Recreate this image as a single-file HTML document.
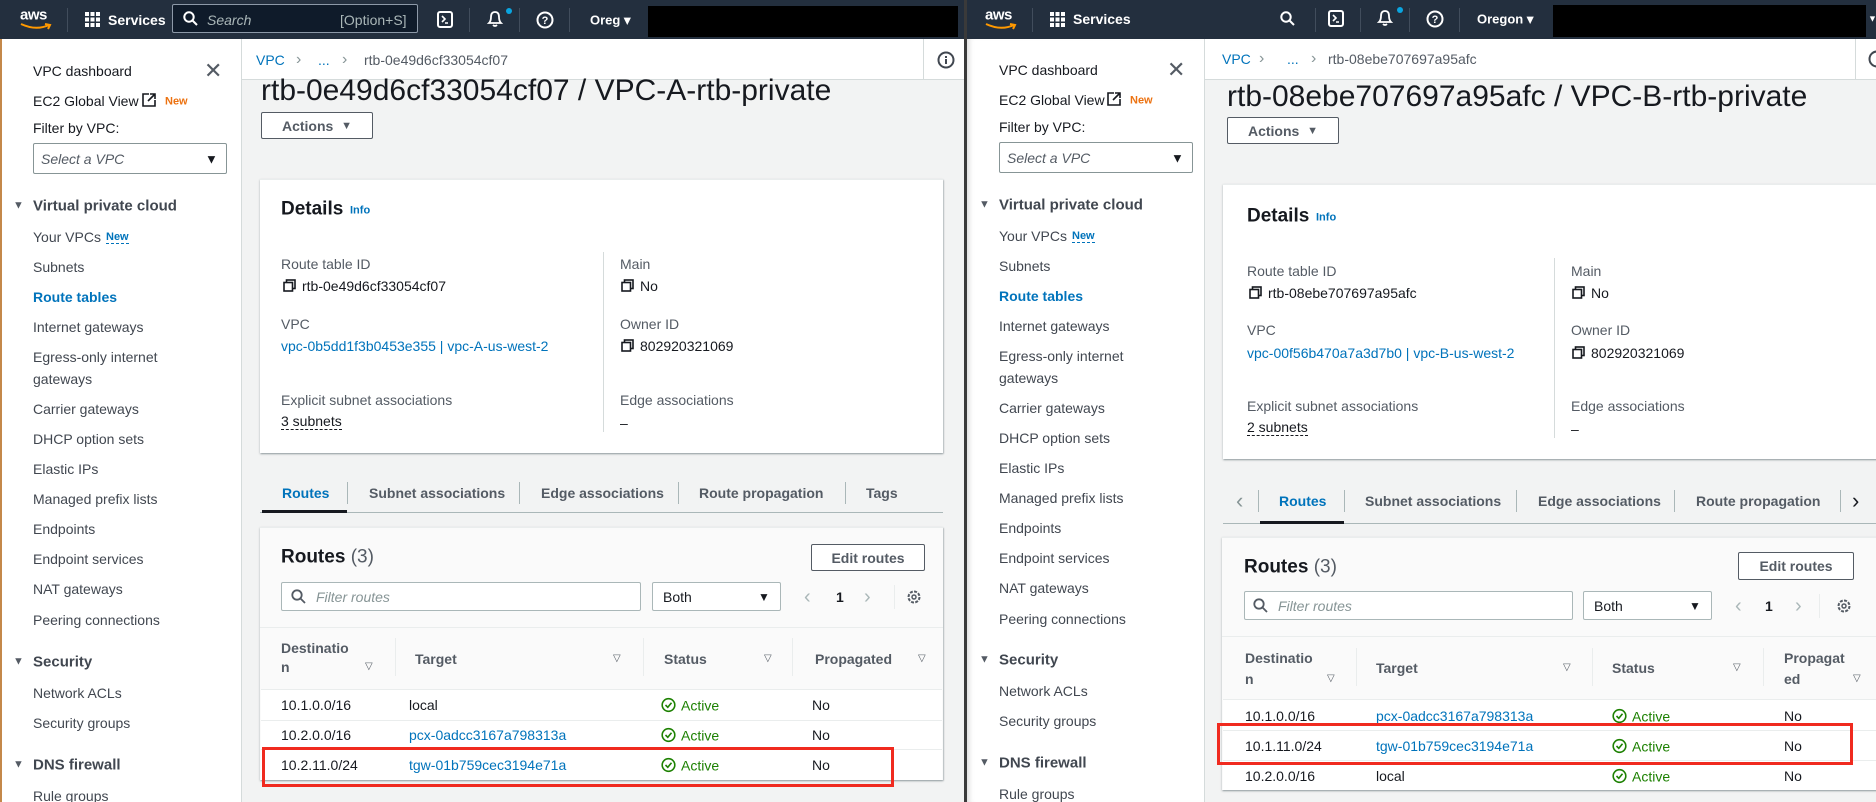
<!DOCTYPE html>
<html><head><meta charset="utf-8">
<style>
*{box-sizing:border-box;margin:0;padding:0}
body{width:1876px;height:802px;overflow:hidden;background:#3a3a3a;font-family:"Liberation Sans",sans-serif;color:#16191f;position:relative}
.win{position:absolute;top:0;height:802px;overflow:hidden;background:#f2f3f3}
.a{position:absolute}
.t{position:absolute;white-space:nowrap;transform:translateY(-50%);font-size:14px;line-height:1}
.top{position:absolute;left:0;top:0;right:0;height:39px;background:#232f3e}
.top .t{color:#fff}
.sb{position:absolute;left:0;top:39px;bottom:0;background:#fff;border-right:1px solid #d5dbdb}
.h{font-weight:bold}
.blue{color:#0073bb!important}
.grey{color:#545b64}
.card{position:absolute;background:#fff;box-shadow:0 1px 2px rgba(0,28,36,.3),1px 1px 1px rgba(0,28,36,.15);border-top:1px solid #eaeded}
.rc{background:#fafafa}
.vl{position:absolute;width:1px;background:#d5dbdb}
.hl{position:absolute;height:1px;background:#eaeded}
.btn{position:absolute;border:1px solid #545b64;background:#fff;border-radius:2px;font-weight:bold;color:#545b64;font-size:14px;display:flex;align-items:center;justify-content:center}
.inp{position:absolute;border:1px solid #aab7b8;background:#fff;border-radius:2px}
.red{position:absolute;border:3px solid #f02a1f}
.act{color:#1d8102;display:flex;align-items:center;gap:5px}
.act svg{flex:none}
</style></head><body>

<!-- LEFT WINDOW -->
<div class="win" style="left:0;width:964px">
  <div class="top">
    <div class="t" style="left:20px;top:15px;font-size:15px;font-weight:bold;letter-spacing:-.5px">aws</div>
    <svg class="a" style="left:20px;top:23px" width="32" height="7"><path d="M1 1 Q16 8 29 2 M25 1 L30 2 L28 6" stroke="#ff9900" stroke-width="2" fill="none"/></svg>
    <div class="a" style="left:67px;top:8px;width:1px;height:24px;background:#414d5c"></div>
    <svg class="a" style="left:85px;top:12px" width="15" height="15"><g fill="#fff"><rect x="0" y="0" width="4" height="4"/><rect x="5.5" y="0" width="4" height="4"/><rect x="11" y="0" width="4" height="4"/><rect x="0" y="5.5" width="4" height="4"/><rect x="5.5" y="5.5" width="4" height="4"/><rect x="11" y="5.5" width="4" height="4"/><rect x="0" y="11" width="4" height="4"/><rect x="5.5" y="11" width="4" height="4"/><rect x="11" y="11" width="4" height="4"/></g></svg>
    <div class="t" style="left:108px;top:20px;font-size:14px;font-weight:bold">Services</div>
    <div class="a" style="left:172px;top:4px;width:246px;height:29px;border:1px solid #8d99a8;border-radius:2px;background:#0f1b2a"></div>
    <svg class="a" style="left:183px;top:11px" width="15" height="15"><circle cx="6" cy="6" r="4.7" stroke="#fff" stroke-width="2" fill="none"/><path d="M9.5 9.5 L14 14" stroke="#fff" stroke-width="2"/></svg>
    <div class="t" style="left:207px;top:20px;font-size:14px;font-style:italic;color:#aab7b8">Search</div>
    <div class="t" style="left:340px;top:20px;font-size:14px;color:#aab7b8">[Option+S]</div>
    <svg class="a" style="left:437px;top:11px" width="16" height="17"><rect x="1" y="1" width="14" height="15" rx="2" stroke="#fff" stroke-width="2" fill="none"/><path d="M5 5 L8 8 L5 11 M8 12 H11" stroke="#fff" stroke-width="1.6" fill="none"/></svg>
    <div class="a" style="left:469px;top:8px;width:1px;height:24px;background:#414d5c"></div>
    <svg class="a" style="left:486px;top:9px" width="18" height="19"><path d="M3 14 Q5 12 5 8 Q5 3 9 3 Q13 3 13 8 Q13 12 15 14 Z M7 16 Q9 18 11 16" stroke="#fff" stroke-width="1.8" fill="none"/></svg>
    <div class="a" style="left:506px;top:8px;width:6px;height:6px;border-radius:50%;background:#0aa5e0"></div>
    <div class="a" style="left:519px;top:8px;width:1px;height:24px;background:#414d5c"></div>
    <svg class="a" style="left:536px;top:11px" width="18" height="18"><circle cx="9" cy="9" r="7.5" stroke="#fff" stroke-width="2" fill="none"/><text x="9" y="13" font-size="11" font-weight="bold" fill="#fff" text-anchor="middle" font-family="Liberation Sans">?</text></svg>
    <div class="a" style="left:569px;top:8px;width:1px;height:24px;background:#414d5c"></div>
    <div class="t" style="left:590px;top:20px;font-size:13px;font-weight:bold">Oreg ▾</div>
    <div class="a" style="left:648px;top:6px;width:310px;height:31px;background:#000"></div>
  </div>
  <div class="sb" style="width:242px">
    <div class="a" style="left:0;top:0;width:2px;bottom:0;background:#c4884a"></div>
  </div>
  <div class="t" style="left:33px;top:71px">VPC dashboard</div>
  <div class="t" style="left:204px;top:71px;font-size:22px;color:#545b64">✕</div>
  <div class="t" style="left:33px;top:101px">EC2 Global View</div>
  <svg class="a" style="left:142px;top:93px" width="14" height="14"><path d="M7 1 H1 V13 H13 V7 M8 1 H13 V6 M13 1 L6 8" stroke="#16191f" stroke-width="1.6" fill="none"/></svg>
  <div class="t" style="left:165px;top:102px;font-size:11px;color:#ec7211;font-weight:bold">New</div>
  <div class="t" style="left:33px;top:128px">Filter by VPC:</div>
  <div class="inp" style="left:33px;top:143px;width:194px;height:31px;border-color:#879596"></div>
  <div class="t" style="left:41px;top:159px;font-style:italic;color:#545b64">Select a VPC</div>
  <div class="t" style="left:205px;top:159px;font-size:13px;color:#16191f">▼</div>
  <div class="t" style="left:13px;top:206px;font-size:11px;color:#545b64">▼</div>
  <div class="t h" style="left:33px;top:206px;font-size:15px;color:#414750">Virtual private cloud</div>
  <div class="t" style="left:33px;top:237px;color:#414750">Your VPCs</div>
  <div class="t h blue" style="left:106px;top:238px;font-size:11px;border-bottom:1px dashed #0073bb">New</div>
  <div class="t" style="left:33px;top:267px;color:#414750">Subnets</div>
  <div class="t h blue" style="left:33px;top:297px">Route tables</div>
  <div class="t" style="left:33px;top:327px;color:#414750">Internet gateways</div>
  <div class="t" style="left:33px;top:357px;color:#414750">Egress-only internet</div>
  <div class="t" style="left:33px;top:379px;color:#414750">gateways</div>
  <div class="t" style="left:33px;top:409px;color:#414750">Carrier gateways</div>
  <div class="t" style="left:33px;top:439px;color:#414750">DHCP option sets</div>
  <div class="t" style="left:33px;top:469px;color:#414750">Elastic IPs</div>
  <div class="t" style="left:33px;top:499px;color:#414750">Managed prefix lists</div>
  <div class="t" style="left:33px;top:529px;color:#414750">Endpoints</div>
  <div class="t" style="left:33px;top:559px;color:#414750">Endpoint services</div>
  <div class="t" style="left:33px;top:589px;color:#414750">NAT gateways</div>
  <div class="t" style="left:33px;top:620px;color:#414750">Peering connections</div>
  <div class="t" style="left:13px;top:662px;font-size:11px;color:#545b64">▼</div>
  <div class="t h" style="left:33px;top:662px;font-size:15px;color:#414750">Security</div>
  <div class="t" style="left:33px;top:693px;color:#414750">Network ACLs</div>
  <div class="t" style="left:33px;top:723px;color:#414750">Security groups</div>
  <div class="t" style="left:13px;top:765px;font-size:11px;color:#545b64">▼</div>
  <div class="t h" style="left:33px;top:765px;font-size:15px;color:#414750">DNS firewall</div>
  <div class="t" style="left:33px;top:796px;color:#414750">Rule groups</div>

  <div class="a" style="left:242px;top:39px;right:0;height:41px;background:#fff;border-bottom:1px solid #d5dbdb"></div>
  <div class="t blue" style="left:256px;top:60px">VPC</div>
  <div class="t" style="left:296px;top:60px;color:#879596;font-size:16px">›</div>
  <div class="t blue" style="left:318px;top:60px">...</div>
  <div class="t" style="left:342px;top:60px;color:#879596;font-size:16px">›</div>
  <div class="t" style="left:364px;top:60px;color:#545b64">rtb-0e49d6cf33054cf07</div>
  <div class="a" style="left:923px;top:39px;width:1px;height:41px;background:#d5dbdb"></div>
  <svg class="a" style="left:937px;top:51px" width="18" height="18"><circle cx="9" cy="9" r="7.5" stroke="#414750" stroke-width="2" fill="none"/><rect x="8" y="8" width="2" height="5" fill="#414750"/><rect x="8" y="5" width="2" height="2" fill="#414750"/></svg>

  <div class="t" style="left:261px;top:91px;font-size:30px;color:#16191f">rtb-0e49d6cf33054cf07 / VPC-A-rtb-private</div>
  <div class="btn" style="left:261px;top:112px;width:112px;height:27px">Actions&nbsp;&nbsp;<span style="font-size:11px">▼</span></div>

  <div class="card" style="left:260px;top:179px;width:683px;height:274px"></div>
  <div class="t h" style="left:281px;top:209px;font-size:19px">Details</div>
  <div class="t h blue" style="left:350px;top:211px;font-size:11px">Info</div>
  <div class="vl" style="left:603px;top:252px;height:180px"></div>
  <div class="t grey" style="left:281px;top:264px">Route table ID</div>
  <svg class="a" style="left:283px;top:279px" width="13" height="13"><rect x="3.5" y="1" width="8.5" height="8.5" stroke="#16191f" stroke-width="1.6" fill="none"/><rect x="1" y="3.5" width="8.5" height="8.5" stroke="#16191f" stroke-width="1.6" fill="#fff"/></svg>
  <div class="t" style="left:302px;top:286px">rtb-0e49d6cf33054cf07</div>
  <div class="t grey" style="left:281px;top:324px">VPC</div>
  <div class="t blue" style="left:281px;top:346px">vpc-0b5dd1f3b0453e355 | vpc-A-us-west-2</div>
  <div class="t grey" style="left:281px;top:400px">Explicit subnet associations</div>
  <div class="t" style="left:281px;top:422px;border-bottom:1px dashed #16191f;padding-bottom:1px">3 subnets</div>
  <div class="t grey" style="left:620px;top:264px">Main</div>
  <svg class="a" style="left:621px;top:279px" width="13" height="13"><rect x="3.5" y="1" width="8.5" height="8.5" stroke="#16191f" stroke-width="1.6" fill="none"/><rect x="1" y="3.5" width="8.5" height="8.5" stroke="#16191f" stroke-width="1.6" fill="#fff"/></svg>
  <div class="t" style="left:640px;top:286px">No</div>
  <div class="t grey" style="left:620px;top:324px">Owner ID</div>
  <svg class="a" style="left:621px;top:339px" width="13" height="13"><rect x="3.5" y="1" width="8.5" height="8.5" stroke="#16191f" stroke-width="1.6" fill="none"/><rect x="1" y="3.5" width="8.5" height="8.5" stroke="#16191f" stroke-width="1.6" fill="#fff"/></svg>
  <div class="t" style="left:640px;top:346px">802920321069</div>
  <div class="t grey" style="left:620px;top:400px">Edge associations</div>
  <div class="t" style="left:620px;top:423px">–</div>

  <div class="a" style="left:260px;top:512px;width:683px;height:1px;background:#aab7b8"></div>
  <div class="a" style="left:262px;top:510px;width:85px;height:3px;background:#16191f"></div>
  <div class="t h blue" style="left:282px;top:493px">Routes</div>
  <div class="vl" style="left:347px;top:482px;height:22px;background:#aab7b8"></div>
  <div class="t h grey" style="left:369px;top:493px">Subnet associations</div>
  <div class="vl" style="left:519px;top:482px;height:22px;background:#aab7b8"></div>
  <div class="t h grey" style="left:541px;top:493px">Edge associations</div>
  <div class="vl" style="left:678px;top:482px;height:22px;background:#aab7b8"></div>
  <div class="t h grey" style="left:699px;top:493px">Route propagation</div>
  <div class="vl" style="left:845px;top:482px;height:22px;background:#aab7b8"></div>
  <div class="t h grey" style="left:866px;top:493px">Tags</div>

  <div class="card rc" style="left:260px;top:527px;width:683px;height:253px"></div>
  <div class="t h" style="left:281px;top:557px;font-size:19px">Routes <span style="font-weight:normal;color:#545b64">(3)</span></div>
  <div class="btn" style="left:811px;top:544px;width:114px;height:27px">Edit routes</div>
  <div class="inp" style="left:281px;top:582px;width:360px;height:29px"></div>
  <svg class="a" style="left:291px;top:589px" width="15" height="15"><circle cx="6" cy="6" r="4.7" stroke="#545b64" stroke-width="1.8" fill="none"/><path d="M9.5 9.5 L14 14" stroke="#545b64" stroke-width="1.8"/></svg>
  <div class="t" style="left:316px;top:597px;font-style:italic;color:#879596">Filter routes</div>
  <div class="inp" style="left:652px;top:582px;width:129px;height:29px"></div>
  <div class="t" style="left:663px;top:597px">Both</div>
  <div class="t" style="left:758px;top:597px;font-size:12px">▼</div>
  <div class="t" style="left:804px;top:597px;font-size:20px;color:#aab7b8">‹</div>
  <div class="t h" style="left:836px;top:597px">1</div>
  <div class="t" style="left:864px;top:597px;font-size:20px;color:#aab7b8">›</div>
  <div class="vl" style="left:894px;top:585px;height:24px;background:#eaeded"></div>
  <svg class="a" style="left:906px;top:589px" width="16" height="16"><circle cx="8" cy="8" r="5.5" stroke="#545b64" stroke-width="2" fill="none" stroke-dasharray="3 1.3"/><circle cx="8" cy="8" r="2" stroke="#545b64" stroke-width="1.5" fill="none"/></svg>
  <div class="hl" style="left:260px;top:627px;width:683px"></div>
  <div class="t h grey" style="left:281px;top:648px">Destinatio</div>
  <div class="t h grey" style="left:281px;top:667px">n</div>
  <div class="t grey" style="left:365px;top:667px;font-size:10px">▽</div>
  <div class="vl" style="left:395px;top:638px;height:38px;background:#eaeded"></div>
  <div class="t h grey" style="left:415px;top:659px">Target</div>
  <div class="t grey" style="left:613px;top:659px;font-size:10px">▽</div>
  <div class="vl" style="left:643px;top:638px;height:38px;background:#eaeded"></div>
  <div class="t h grey" style="left:664px;top:659px">Status</div>
  <div class="t grey" style="left:764px;top:659px;font-size:10px">▽</div>
  <div class="vl" style="left:792px;top:638px;height:38px;background:#eaeded"></div>
  <div class="t h grey" style="left:815px;top:659px">Propagated</div>
  <div class="t grey" style="left:918px;top:659px;font-size:10px">▽</div>
  <div class="a" style="left:261px;top:689px;width:681px;height:91px;background:#fff"></div>
  <div class="hl" style="left:261px;top:689px;width:681px"></div>
  <div class="hl" style="left:261px;top:720px;width:681px"></div>
  <div class="hl" style="left:261px;top:749px;width:681px"></div>
  <div class="t" style="left:281px;top:705px">10.1.0.0/16</div>
  <div class="t" style="left:409px;top:705px">local</div>
  <div class="t act" style="left:661px;top:705px"><svg width="15" height="15"><circle cx="7.5" cy="7.5" r="6.3" stroke="#1d8102" stroke-width="1.6" fill="none"/><path d="M4.5 7.5 L6.8 9.8 L10.5 5.3" stroke="#1d8102" stroke-width="1.6" fill="none"/></svg>Active</div>
  <div class="t" style="left:812px;top:705px">No</div>
  <div class="t" style="left:281px;top:735px">10.2.0.0/16</div>
  <div class="t blue" style="left:409px;top:735px">pcx-0adcc3167a798313a</div>
  <div class="t act" style="left:661px;top:735px"><svg width="15" height="15"><circle cx="7.5" cy="7.5" r="6.3" stroke="#1d8102" stroke-width="1.6" fill="none"/><path d="M4.5 7.5 L6.8 9.8 L10.5 5.3" stroke="#1d8102" stroke-width="1.6" fill="none"/></svg>Active</div>
  <div class="t" style="left:812px;top:735px">No</div>
  <div class="t" style="left:281px;top:765px">10.2.11.0/24</div>
  <div class="t blue" style="left:409px;top:765px">tgw-01b759cec3194e71a</div>
  <div class="t act" style="left:661px;top:765px"><svg width="15" height="15"><circle cx="7.5" cy="7.5" r="6.3" stroke="#1d8102" stroke-width="1.6" fill="none"/><path d="M4.5 7.5 L6.8 9.8 L10.5 5.3" stroke="#1d8102" stroke-width="1.6" fill="none"/></svg>Active</div>
  <div class="t" style="left:812px;top:765px">No</div>
  <div class="red" style="left:262px;top:747px;width:632px;height:40px"></div>
</div>

<!-- RIGHT WINDOW -->
<div class="win" style="left:967px;width:909px">
  <div class="top">
    <div class="t" style="left:18px;top:15px;font-size:15px;font-weight:bold;letter-spacing:-.5px">aws</div>
    <svg class="a" style="left:18px;top:23px" width="32" height="7"><path d="M1 1 Q16 8 29 2 M25 1 L30 2 L28 6" stroke="#ff9900" stroke-width="2" fill="none"/></svg>
    <div class="a" style="left:65px;top:8px;width:1px;height:24px;background:#414d5c"></div>
    <svg class="a" style="left:83px;top:12px" width="15" height="15"><g fill="#fff"><rect x="0" y="0" width="4" height="4"/><rect x="5.5" y="0" width="4" height="4"/><rect x="11" y="0" width="4" height="4"/><rect x="0" y="5.5" width="4" height="4"/><rect x="5.5" y="5.5" width="4" height="4"/><rect x="11" y="5.5" width="4" height="4"/><rect x="0" y="11" width="4" height="4"/><rect x="5.5" y="11" width="4" height="4"/><rect x="11" y="11" width="4" height="4"/></g></svg>
    <div class="t" style="left:106px;top:19px;font-size:14px;font-weight:bold">Services</div>
    <svg class="a" style="left:313px;top:11px" width="15" height="15"><circle cx="6" cy="6" r="4.7" stroke="#fff" stroke-width="2" fill="none"/><path d="M9.5 9.5 L14 14" stroke="#fff" stroke-width="2"/></svg>
    <div class="a" style="left:348px;top:8px;width:1px;height:24px;background:#414d5c"></div>
    <svg class="a" style="left:361px;top:10px" width="16" height="17"><rect x="1" y="1" width="14" height="15" rx="2" stroke="#fff" stroke-width="2" fill="none"/><path d="M5 5 L8 8 L5 11 M8 12 H11" stroke="#fff" stroke-width="1.6" fill="none"/></svg>
    <div class="a" style="left:393px;top:8px;width:1px;height:24px;background:#414d5c"></div>
    <svg class="a" style="left:409px;top:8px" width="18" height="19"><path d="M3 14 Q5 12 5 8 Q5 3 9 3 Q13 3 13 8 Q13 12 15 14 Z M7 16 Q9 18 11 16" stroke="#fff" stroke-width="1.8" fill="none"/></svg>
    <div class="a" style="left:430px;top:7px;width:6px;height:6px;border-radius:50%;background:#0aa5e0"></div>
    <div class="a" style="left:442px;top:8px;width:1px;height:24px;background:#414d5c"></div>
    <svg class="a" style="left:459px;top:10px" width="18" height="18"><circle cx="9" cy="9" r="7.5" stroke="#fff" stroke-width="2" fill="none"/><text x="9" y="13" font-size="11" font-weight="bold" fill="#fff" text-anchor="middle" font-family="Liberation Sans">?</text></svg>
    <div class="a" style="left:492px;top:8px;width:1px;height:24px;background:#414d5c"></div>
    <div class="t" style="left:510px;top:19px;font-size:13px;font-weight:bold">Oregon ▾</div>
    <div class="a" style="left:586px;top:5px;width:313px;height:32px;background:#000"></div>
    <div class="t" style="left:901px;top:19px;font-size:9px">▼</div>
  </div>
  <div class="sb" style="width:238px;box-shadow:inset 6px 0 6px -4px rgba(0,0,0,.15)"></div>
  <div class="t" style="left:32px;top:70px">VPC dashboard</div>
  <div class="t" style="left:200px;top:70px;font-size:22px;color:#545b64">✕</div>
  <div class="t" style="left:32px;top:100px">EC2 Global View</div>
  <svg class="a" style="left:140px;top:92px" width="14" height="14"><path d="M7 1 H1 V13 H13 V7 M8 1 H13 V6 M13 1 L6 8" stroke="#16191f" stroke-width="1.6" fill="none"/></svg>
  <div class="t" style="left:163px;top:101px;font-size:11px;color:#ec7211;font-weight:bold">New</div>
  <div class="t" style="left:32px;top:127px">Filter by VPC:</div>
  <div class="inp" style="left:32px;top:142px;width:194px;height:31px;border-color:#879596"></div>
  <div class="t" style="left:40px;top:158px;font-style:italic;color:#545b64">Select a VPC</div>
  <div class="t" style="left:204px;top:158px;font-size:13px">▼</div>
  <div class="t" style="left:12px;top:205px;font-size:11px;color:#545b64">▼</div>
  <div class="t h" style="left:32px;top:205px;font-size:15px;color:#414750">Virtual private cloud</div>
  <div class="t" style="left:32px;top:236px;color:#414750">Your VPCs</div>
  <div class="t h blue" style="left:105px;top:237px;font-size:11px;border-bottom:1px dashed #0073bb">New</div>
  <div class="t" style="left:32px;top:266px;color:#414750">Subnets</div>
  <div class="t h blue" style="left:32px;top:296px">Route tables</div>
  <div class="t" style="left:32px;top:326px;color:#414750">Internet gateways</div>
  <div class="t" style="left:32px;top:356px;color:#414750">Egress-only internet</div>
  <div class="t" style="left:32px;top:378px;color:#414750">gateways</div>
  <div class="t" style="left:32px;top:408px;color:#414750">Carrier gateways</div>
  <div class="t" style="left:32px;top:438px;color:#414750">DHCP option sets</div>
  <div class="t" style="left:32px;top:468px;color:#414750">Elastic IPs</div>
  <div class="t" style="left:32px;top:498px;color:#414750">Managed prefix lists</div>
  <div class="t" style="left:32px;top:528px;color:#414750">Endpoints</div>
  <div class="t" style="left:32px;top:558px;color:#414750">Endpoint services</div>
  <div class="t" style="left:32px;top:588px;color:#414750">NAT gateways</div>
  <div class="t" style="left:32px;top:619px;color:#414750">Peering connections</div>
  <div class="t" style="left:12px;top:660px;font-size:11px;color:#545b64">▼</div>
  <div class="t h" style="left:32px;top:660px;font-size:15px;color:#414750">Security</div>
  <div class="t" style="left:32px;top:691px;color:#414750">Network ACLs</div>
  <div class="t" style="left:32px;top:721px;color:#414750">Security groups</div>
  <div class="t" style="left:12px;top:763px;font-size:11px;color:#545b64">▼</div>
  <div class="t h" style="left:32px;top:763px;font-size:15px;color:#414750">DNS firewall</div>
  <div class="t" style="left:32px;top:794px;color:#414750">Rule groups</div>

  <div class="a" style="left:238px;top:39px;right:0;height:41px;background:#fff;border-bottom:1px solid #d5dbdb"></div>
  <div class="t blue" style="left:255px;top:59px">VPC</div>
  <div class="t" style="left:292px;top:59px;color:#879596;font-size:16px">›</div>
  <div class="t blue" style="left:320px;top:59px">...</div>
  <div class="t" style="left:344px;top:59px;color:#879596;font-size:16px">›</div>
  <div class="t" style="left:361px;top:59px;color:#545b64">rtb-08ebe707697a95afc</div>
  <div class="a" style="left:888px;top:39px;width:1px;height:41px;background:#d5dbdb"></div>
  <svg class="a" style="left:901px;top:50px" width="18" height="18"><circle cx="9" cy="9" r="7.5" stroke="#414750" stroke-width="2" fill="none"/><rect x="8" y="8" width="2" height="5" fill="#414750"/><rect x="8" y="5" width="2" height="2" fill="#414750"/></svg>

  <div class="t" style="left:260px;top:97px;font-size:30px">rtb-08ebe707697a95afc / VPC-B-rtb-private</div>
  <div class="btn" style="left:260px;top:117px;width:112px;height:27px">Actions&nbsp;&nbsp;<span style="font-size:11px">▼</span></div>

  <div class="card" style="left:256px;top:184px;width:660px;height:275px"></div>
  <div class="t h" style="left:280px;top:216px;font-size:19px">Details</div>
  <div class="t h blue" style="left:349px;top:218px;font-size:11px">Info</div>
  <div class="vl" style="left:587px;top:258px;height:180px"></div>
  <div class="t grey" style="left:280px;top:271px">Route table ID</div>
  <svg class="a" style="left:282px;top:286px" width="13" height="13"><rect x="3.5" y="1" width="8.5" height="8.5" stroke="#16191f" stroke-width="1.6" fill="none"/><rect x="1" y="3.5" width="8.5" height="8.5" stroke="#16191f" stroke-width="1.6" fill="#fff"/></svg>
  <div class="t" style="left:301px;top:293px">rtb-08ebe707697a95afc</div>
  <div class="t grey" style="left:280px;top:330px">VPC</div>
  <div class="t blue" style="left:280px;top:353px">vpc-00f56b470a7a3d7b0 | vpc-B-us-west-2</div>
  <div class="t grey" style="left:280px;top:406px">Explicit subnet associations</div>
  <div class="t" style="left:280px;top:428px;border-bottom:1px dashed #16191f;padding-bottom:1px">2 subnets</div>
  <div class="t grey" style="left:604px;top:271px">Main</div>
  <svg class="a" style="left:605px;top:286px" width="13" height="13"><rect x="3.5" y="1" width="8.5" height="8.5" stroke="#16191f" stroke-width="1.6" fill="none"/><rect x="1" y="3.5" width="8.5" height="8.5" stroke="#16191f" stroke-width="1.6" fill="#fff"/></svg>
  <div class="t" style="left:624px;top:293px">No</div>
  <div class="t grey" style="left:604px;top:330px">Owner ID</div>
  <svg class="a" style="left:605px;top:346px" width="13" height="13"><rect x="3.5" y="1" width="8.5" height="8.5" stroke="#16191f" stroke-width="1.6" fill="none"/><rect x="1" y="3.5" width="8.5" height="8.5" stroke="#16191f" stroke-width="1.6" fill="#fff"/></svg>
  <div class="t" style="left:624px;top:353px">802920321069</div>
  <div class="t grey" style="left:604px;top:406px">Edge associations</div>
  <div class="t" style="left:604px;top:429px">–</div>

  <div class="a" style="left:256px;top:523px;width:660px;height:1px;background:#aab7b8"></div>
  <div class="a" style="left:293px;top:521px;width:84px;height:3px;background:#16191f"></div>
  <div class="t" style="left:269px;top:501px;font-size:22px;color:#879596">‹</div>
  <div class="vl" style="left:291px;top:490px;height:22px;background:#aab7b8"></div>
  <div class="t h blue" style="left:312px;top:501px">Routes</div>
  <div class="vl" style="left:377px;top:490px;height:22px;background:#aab7b8"></div>
  <div class="t h grey" style="left:398px;top:501px">Subnet associations</div>
  <div class="vl" style="left:549px;top:490px;height:22px;background:#aab7b8"></div>
  <div class="t h grey" style="left:571px;top:501px">Edge associations</div>
  <div class="vl" style="left:707px;top:490px;height:22px;background:#aab7b8"></div>
  <div class="t h grey" style="left:729px;top:501px">Route propagation</div>
  <div class="vl" style="left:873px;top:490px;height:22px;background:#aab7b8"></div>
  <div class="t" style="left:885px;top:501px;font-size:22px;color:#16191f">›</div>

  <div class="card rc" style="left:255px;top:537px;width:660px;height:253px"></div>
  <div class="t h" style="left:277px;top:567px;font-size:19px">Routes <span style="font-weight:normal;color:#545b64">(3)</span></div>
  <div class="btn" style="left:771px;top:552px;width:116px;height:28px">Edit routes</div>
  <div class="inp" style="left:277px;top:591px;width:329px;height:29px"></div>
  <svg class="a" style="left:286px;top:598px" width="15" height="15"><circle cx="6" cy="6" r="4.7" stroke="#545b64" stroke-width="1.8" fill="none"/><path d="M9.5 9.5 L14 14" stroke="#545b64" stroke-width="1.8"/></svg>
  <div class="t" style="left:311px;top:606px;font-style:italic;color:#879596">Filter routes</div>
  <div class="inp" style="left:616px;top:591px;width:129px;height:29px"></div>
  <div class="t" style="left:627px;top:606px">Both</div>
  <div class="t" style="left:722px;top:606px;font-size:12px">▼</div>
  <div class="t" style="left:768px;top:606px;font-size:20px;color:#aab7b8">‹</div>
  <div class="t h" style="left:798px;top:606px">1</div>
  <div class="t" style="left:828px;top:606px;font-size:20px;color:#aab7b8">›</div>
  <div class="vl" style="left:852px;top:594px;height:24px;background:#eaeded"></div>
  <svg class="a" style="left:869px;top:598px" width="16" height="16"><circle cx="8" cy="8" r="5.5" stroke="#545b64" stroke-width="2" fill="none" stroke-dasharray="3 1.3"/><circle cx="8" cy="8" r="2" stroke="#545b64" stroke-width="1.5" fill="none"/></svg>
  <div class="hl" style="left:255px;top:636px;width:660px"></div>
  <div class="t h grey" style="left:278px;top:658px">Destinatio</div>
  <div class="t h grey" style="left:278px;top:679px">n</div>
  <div class="t grey" style="left:360px;top:679px;font-size:10px">▽</div>
  <div class="vl" style="left:389px;top:648px;height:38px;background:#eaeded"></div>
  <div class="t h grey" style="left:409px;top:668px">Target</div>
  <div class="t grey" style="left:596px;top:668px;font-size:10px">▽</div>
  <div class="vl" style="left:625px;top:648px;height:38px;background:#eaeded"></div>
  <div class="t h grey" style="left:645px;top:668px">Status</div>
  <div class="t grey" style="left:766px;top:668px;font-size:10px">▽</div>
  <div class="vl" style="left:796px;top:648px;height:38px;background:#eaeded"></div>
  <div class="t h grey" style="left:817px;top:658px">Propagat</div>
  <div class="t h grey" style="left:817px;top:679px">ed</div>
  <div class="t grey" style="left:886px;top:679px;font-size:10px">▽</div>
  <div class="a" style="left:256px;top:699px;width:660px;height:91px;background:#fff"></div>
  <div class="hl" style="left:256px;top:699px;width:660px"></div>
  <div class="hl" style="left:256px;top:730px;width:660px"></div>
  <div class="hl" style="left:256px;top:760px;width:660px"></div>
  <div class="t" style="left:278px;top:716px">10.1.0.0/16</div>
  <div class="t blue" style="left:409px;top:716px">pcx-0adcc3167a798313a</div>
  <div class="t act" style="left:645px;top:716px"><svg width="15" height="15"><circle cx="7.5" cy="7.5" r="6.3" stroke="#1d8102" stroke-width="1.6" fill="none"/><path d="M4.5 7.5 L6.8 9.8 L10.5 5.3" stroke="#1d8102" stroke-width="1.6" fill="none"/></svg>Active</div>
  <div class="t" style="left:817px;top:716px">No</div>
  <div class="t" style="left:278px;top:746px">10.1.11.0/24</div>
  <div class="t blue" style="left:409px;top:746px">tgw-01b759cec3194e71a</div>
  <div class="t act" style="left:645px;top:746px"><svg width="15" height="15"><circle cx="7.5" cy="7.5" r="6.3" stroke="#1d8102" stroke-width="1.6" fill="none"/><path d="M4.5 7.5 L6.8 9.8 L10.5 5.3" stroke="#1d8102" stroke-width="1.6" fill="none"/></svg>Active</div>
  <div class="t" style="left:817px;top:746px">No</div>
  <div class="t" style="left:278px;top:776px">10.2.0.0/16</div>
  <div class="t" style="left:409px;top:776px">local</div>
  <div class="t act" style="left:645px;top:776px"><svg width="15" height="15"><circle cx="7.5" cy="7.5" r="6.3" stroke="#1d8102" stroke-width="1.6" fill="none"/><path d="M4.5 7.5 L6.8 9.8 L10.5 5.3" stroke="#1d8102" stroke-width="1.6" fill="none"/></svg>Active</div>
  <div class="t" style="left:817px;top:776px">No</div>
  <div class="red" style="left:250px;top:723px;width:636px;height:42px"></div>
</div>
</body></html>
